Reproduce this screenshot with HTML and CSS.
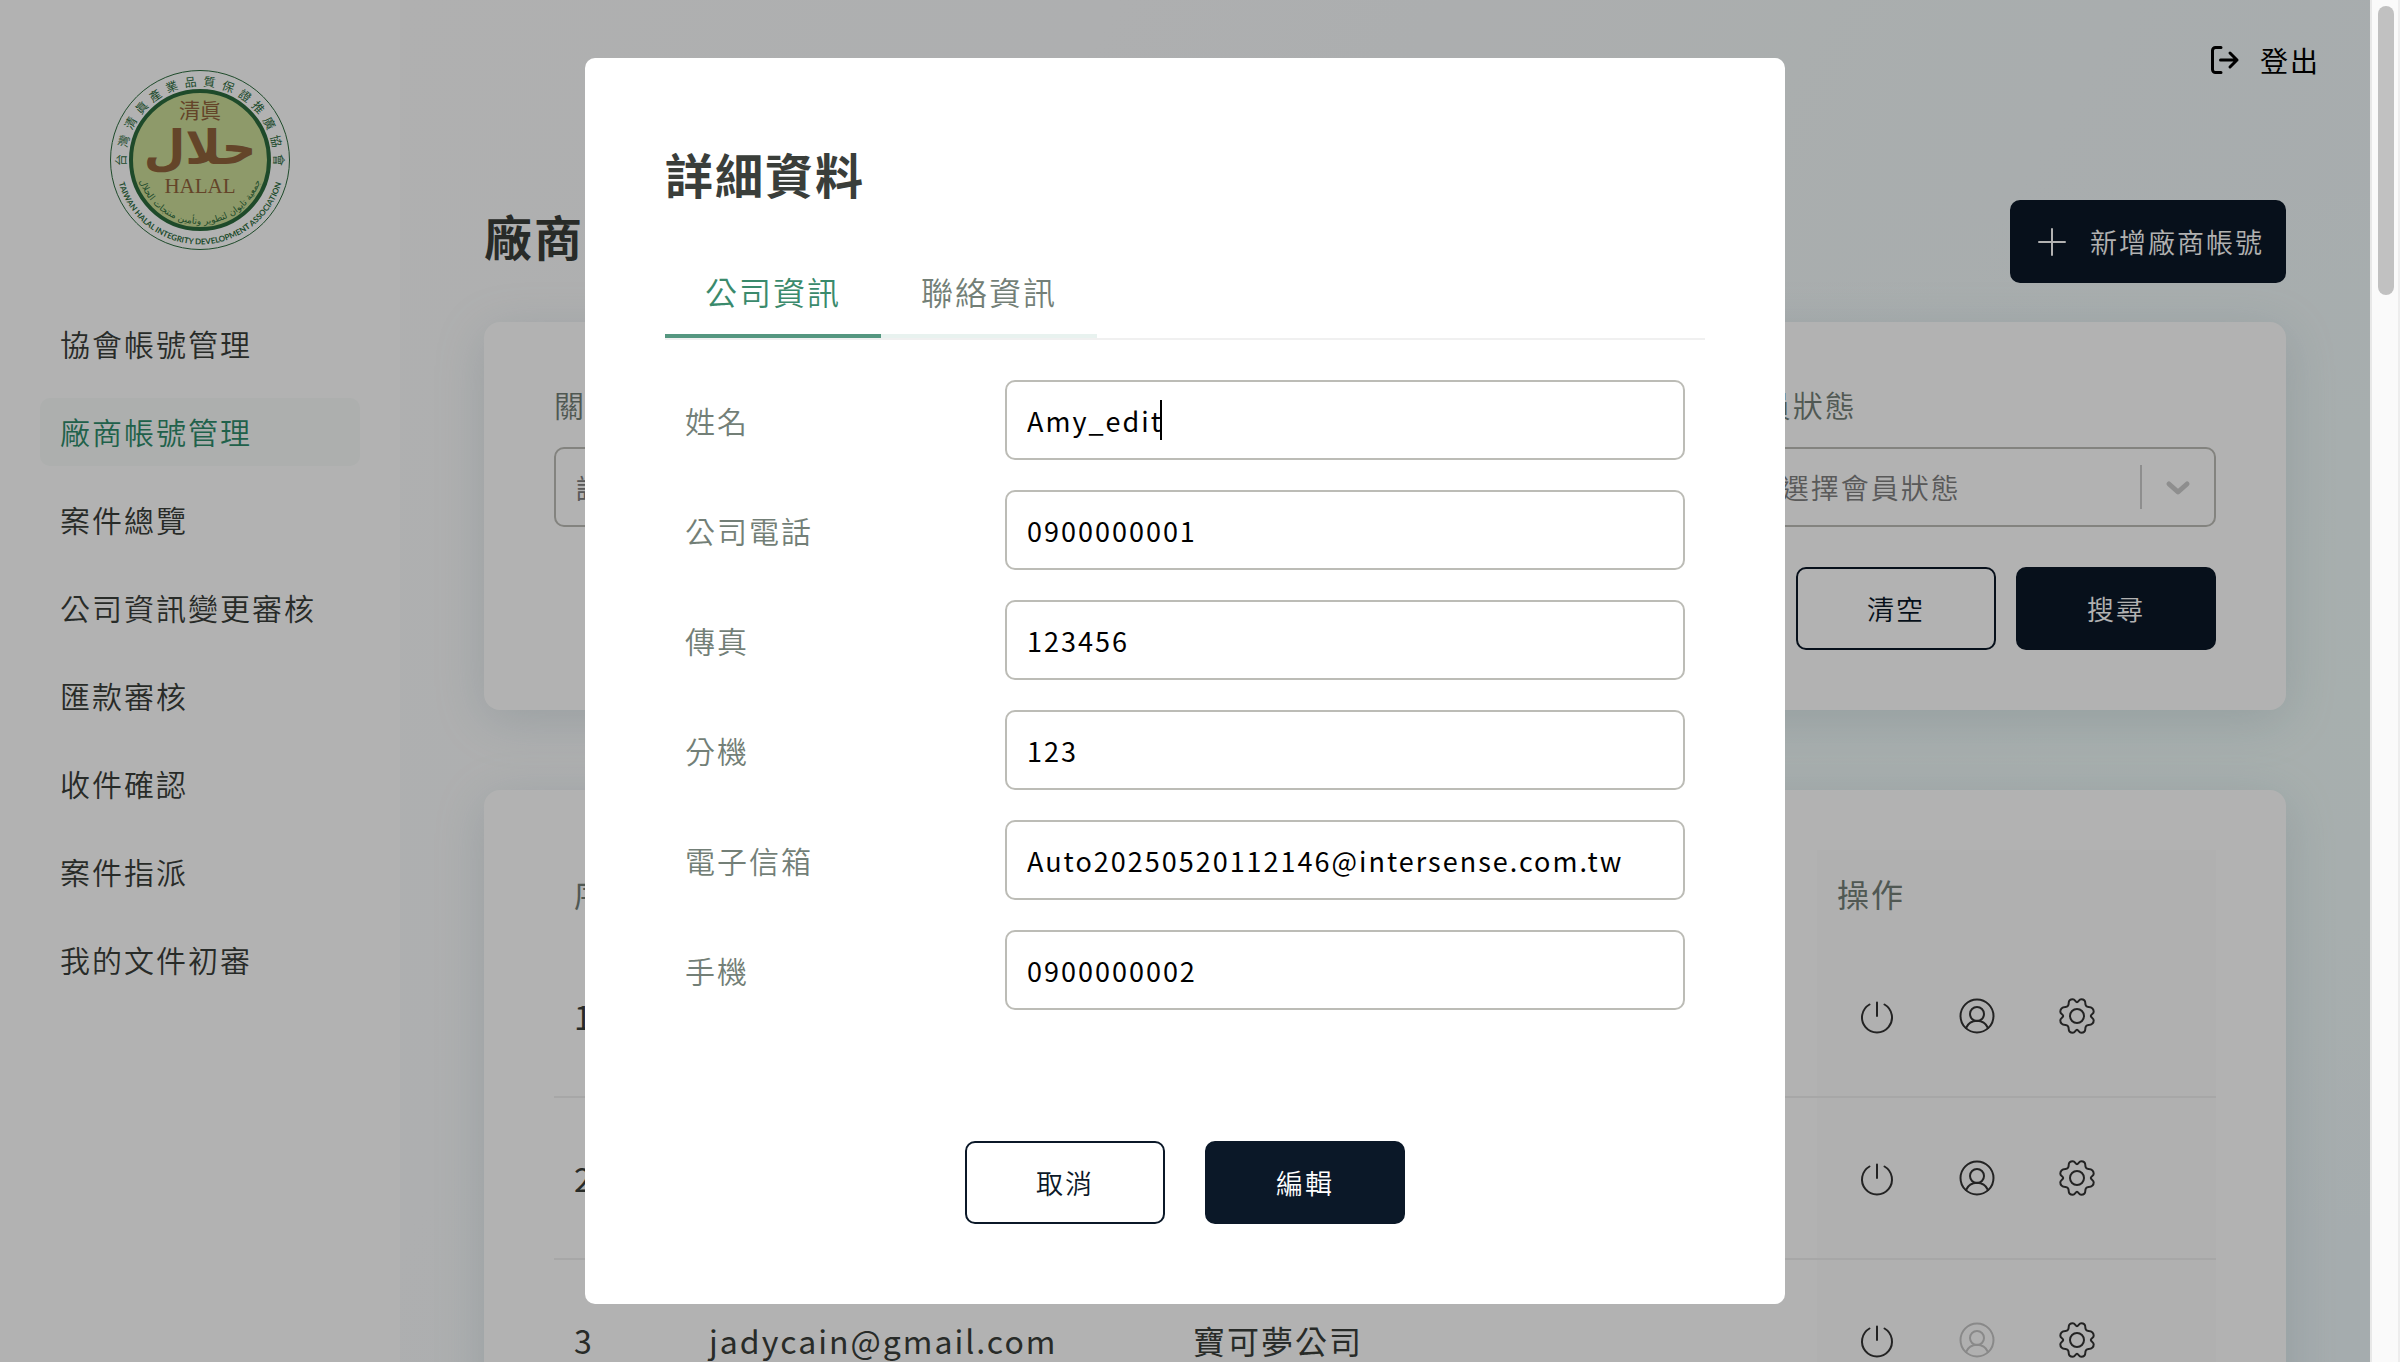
FILE: index.html
```html
<!DOCTYPE html>
<html lang="zh-Hant">
<head>
<meta charset="utf-8">
<title>廠商帳號管理</title>
<link rel="stylesheet" href="styles.css">
</head>
<body>
<svg class="sprite" aria-hidden="true">
  <symbol id="power" viewBox="0 0 40 40"><path d="M20 6.500V20M12.500 8.500a15 15 0 1 0 15 0"/></symbol>
  <symbol id="user" viewBox="0 0 40 40"><circle cx="20" cy="20" r="16.500"/><circle cx="20" cy="18" r="7"/><path d="M9 32c2-4.500 6-7.200 11-7.200s9 2.700 11 7.200"/></symbol>
  <symbol id="gear" viewBox="0 0 40 40"><circle cx="20" cy="20" r="7"/><path d="M20 6.200C21.500 6.200 22 3.300 24.200 3.300C27 3.300 28.300 4.600 28.300 7C28.300 9.300 29 10.800 31.500 11C34 11.200 36.700 12.500 36.700 15.800C36.700 18 33.800 18.500 33.800 20C33.800 21.500 36.700 22 36.700 24.200C36.700 27.500 34 28.800 31.500 29C29 29.200 28.300 30.700 28.300 33C28.300 35.400 27 36.700 24.200 36.700C22 36.700 21.500 33.800 20 33.800C18.500 33.800 18 36.700 15.800 36.700C13 36.700 11.700 35.400 11.700 33C11.700 30.700 11 29.200 8.500 29C6 28.800 3.300 27.500 3.300 24.200C3.300 22 6.200 21.500 6.200 20C6.200 18.500 3.300 18 3.300 15.800C3.300 12.500 6 11.200 8.500 11C11 10.800 11.700 9.300 11.700 7C11.700 4.600 13 3.300 15.800 3.300C18 3.300 18.500 6.200 20 6.200Z"/></symbol>
</svg>
<div class="window">
  <div class="page">
    <div class="app">
      <aside class="sidebar">
        <svg class="logo" viewBox="10 10 180 180" role="img" aria-label="HALAL">
          <defs>
            <path id="outer-arc" d="M15.500 100A84.500 84.500 0 0 0 184.500 100"/>
            <path id="inner-arc" d="M36 100A64 64 0 0 0 164 100"/>
          </defs>
          <circle class="logo-rim" cx="100" cy="100" r="89.500"/>
          <circle class="logo-disc" cx="100" cy="100" r="69"/>
          <g class="logo-ring">
            <text x="100" y="26" transform="rotate(-90 100 100)">台</text>
            <text x="100" y="26" transform="rotate(-76 100 100)">灣</text>
            <text x="100" y="26" transform="rotate(-62 100 100)">清</text>
            <text x="100" y="26" transform="rotate(-48 100 100)">眞</text>
            <text x="100" y="26" transform="rotate(-35 100 100)">產</text>
            <text x="100" y="26" transform="rotate(-21 100 100)">業</text>
            <text x="100" y="26" transform="rotate(-7 100 100)">品</text>
            <text x="100" y="26" transform="rotate(7 100 100)">質</text>
            <text x="100" y="26" transform="rotate(21 100 100)">保</text>
            <text x="100" y="26" transform="rotate(35 100 100)">證</text>
            <text x="100" y="26" transform="rotate(48 100 100)">推</text>
            <text x="100" y="26" transform="rotate(62 100 100)">廣</text>
            <text x="100" y="26" transform="rotate(76 100 100)">協</text>
            <text x="100" y="26" transform="rotate(90 100 100)">會</text>
          </g>
          <text class="logo-english"><textPath href="#outer-arc" startOffset="50%">TAIWAN HALAL INTEGRITY DEVELOPMENT ASSOCIATION</textPath></text>
          <text class="logo-arabic"><textPath href="#inner-arc" startOffset="50%">جمعية تايوان لتطوير وتأمين منتجات الحلال</textPath></text>
          <text class="logo-top" x="100" y="58">清眞</text>
          <text class="logo-halal" x="100" y="104">حلال</text>
          <text class="logo-latin" x="100" y="133">HALAL</text>
        </svg>
        <nav class="menu">
          <a href="#">協會帳號管理</a>
          <a href="#" class="active">廠商帳號管理</a>
          <a href="#">案件總覽</a>
          <a href="#">公司資訊變更審核</a>
          <a href="#">匯款審核</a>
          <a href="#">收件確認</a>
          <a href="#">案件指派</a>
          <a href="#">我的文件初審</a>
        </nav>
      </aside>
      <main class="main">
        <header class="topbar">
          <button class="logout" type="button">
            <svg viewBox="0 0 32 32"><path d="M13 3.500H7.500a3 3 0 0 0-3 3v19a3 3 0 0 0 3 3H13M12.500 16H29M22 9l7 7-7 7"/></svg>
            登出
          </button>
        </header>
        <div class="content">
          <div class="heading">
            <h1>廠商帳號管理</h1>
            <button class="btn btn-dark btn-add" type="button">
              <svg viewBox="0 0 28 28"><path d="M14 1v26M1 14h26"/></svg>
              新增廠商帳號
            </button>
          </div>
          <form class="card">
            <div class="filters">
              <div class="filter">
                <label for="keyword">關鍵字</label>
                <input id="keyword" class="control" type="text" placeholder="請輸入關鍵字">
              </div>
              <div class="filter">
                <label for="status">會員狀態</label>
                <div class="select">
                  <select id="status" class="control"><option>請選擇會員狀態</option></select>
                  <svg class="select-mark" viewBox="0 0 60 44"><path class="rule" d="M1 0v44"/><path class="chevron" d="M29 19l9 8 9-8"/></svg>
                </div>
              </div>
            </div>
            <div class="actions">
              <button class="btn btn-line" type="reset">清空</button>
              <button class="btn btn-dark" type="button">搜尋</button>
            </div>
          </form>
          <section class="card">
            <table class="accounts">
              <colgroup><col class="col-no"><col class="col-account"><col><col class="col-ops"></colgroup>
              <thead>
                <tr><th>序號</th><th>帳號</th><th>公司名稱</th><th class="ops">操作</th></tr>
              </thead>
              <tbody>
                <tr>
                  <td>1</td><td></td><td></td>
                  <td class="ops"><div class="tools">
                    <button type="button" aria-label="啟用"><svg><use href="#power"/></svg></button>
                    <button type="button" aria-label="帳號"><svg><use href="#user"/></svg></button>
                    <button type="button" aria-label="設定"><svg><use href="#gear"/></svg></button>
                  </div></td>
                </tr>
                <tr>
                  <td>2</td><td></td><td></td>
                  <td class="ops"><div class="tools">
                    <button type="button" aria-label="啟用"><svg><use href="#power"/></svg></button>
                    <button type="button" aria-label="帳號"><svg><use href="#user"/></svg></button>
                    <button type="button" aria-label="設定"><svg><use href="#gear"/></svg></button>
                  </div></td>
                </tr>
                <tr>
                  <td>3</td><td>jadycain@gmail.com</td><td>寶可夢公司</td>
                  <td class="ops"><div class="tools">
                    <button type="button" aria-label="啟用"><svg><use href="#power"/></svg></button>
                    <button type="button" aria-label="帳號" disabled><svg><use href="#user"/></svg></button>
                    <button type="button" aria-label="設定"><svg><use href="#gear"/></svg></button>
                  </div></td>
                </tr>
              </tbody>
            </table>
          </section>
        </div>
      </main>
    </div>
    <div class="overlay">
      <form class="modal" role="dialog" aria-labelledby="modal-title">
        <h2 id="modal-title">詳細資料</h2>
        <div class="tabs" role="tablist">
          <button type="button" role="tab" aria-selected="true">公司資訊</button>
          <button type="button" role="tab" aria-selected="false">聯絡資訊</button>
        </div>
        <div class="fields">
          <div class="field"><label for="name">姓名</label><div class="entry"><input id="name" class="control" type="text" value="Amy_edit"><span class="caret"></span></div></div>
          <div class="field"><label for="phone">公司電話</label><div class="entry"><input id="phone" class="control" type="text" value="0900000001"></div></div>
          <div class="field"><label for="fax">傳真</label><div class="entry"><input id="fax" class="control" type="text" value="123456"></div></div>
          <div class="field"><label for="ext">分機</label><div class="entry"><input id="ext" class="control" type="text" value="123"></div></div>
          <div class="field"><label for="email">電子信箱</label><div class="entry"><input id="email" class="control" type="text" value="Auto20250520112146@intersense.com.tw"></div></div>
          <div class="field"><label for="mobile">手機</label><div class="entry"><input id="mobile" class="control" type="text" value="0900000002"></div></div>
        </div>
        <div class="modal-actions">
          <button class="btn btn-line" type="button">取消</button>
          <button class="btn btn-dark" type="button">編輯</button>
        </div>
      </form>
    </div>
  </div>
  <div class="scrollbar"><div class="thumb"></div></div>
</div>
</body>
</html>
```

FILE: styles.css
```css
:root {
  --navy: #0b1828;
  --green: #3a8a6c;
  --ink: #3a3e3a;
  --muted: #737f77;
  --line: #bcbcb6;
}

* { box-sizing: border-box; }

body {
  margin: 0;
  color: var(--ink);
  font-family: "Noto Sans CJK TC", "Noto Sans", sans-serif;
  font-size: 30px;
  letter-spacing: 2px;
}

button, input, select {
  margin: 0;
  font-family: inherit;
  letter-spacing: inherit;
}

h1, h2 {
  margin: 0;
  font-size: 48px;
  line-height: 70px;
  font-weight: 700;
}

svg {
  display: block;
  fill: none;
  stroke-linecap: round;
  stroke-linejoin: round;
}

.sprite { position: absolute; width: 0; height: 0; }

.window {
  display: grid;
  grid-template-columns: minmax(0, 1fr) 30px;
  height: 100vh;
  overflow: hidden;
}

.page {
  position: relative;
  height: 100vh;
  overflow: hidden;
}

.app {
  display: grid;
  grid-template-columns: 400px minmax(0, 1fr);
  min-height: 100%;
}

/* Sidebar */
.sidebar {
  padding: 70px 40px;
  background: #fff;
}

.logo {
  width: 180px;
  height: 180px;
  margin: 0 auto 60px;
  letter-spacing: 0;
  text-anchor: middle;
}

.logo text { fill: #2c6b3d; }
.logo-rim { stroke: #2c6b3d; stroke-width: 1; }
.logo-disc { fill: #ccdd98; stroke: #2c6b3d; stroke-width: 4; }
.logo-ring { font-size: 12px; }
.logo-english { font: 700 8px Lato, sans-serif; }
.logo-arabic { font: 9px "DejaVu Sans", sans-serif; }
.logo .logo-top { fill: #90633c; font-size: 21px; }
.logo .logo-halal { fill: #90633c; font: 700 48px "DejaVu Sans", sans-serif; }
.logo .logo-latin { fill: #90633c; font: 21px "Liberation Serif", serif; }

.menu {
  display: flex;
  flex-direction: column;
  gap: 20px;
}

.menu a {
  height: 68px;
  padding: 0 20px;
  border-radius: 10px;
  color: var(--ink);
  font-weight: 350;
  line-height: 66px;
  text-decoration: none;
}

.menu .active { background: #f8fbfa; color: #2e8b6b; }

/* Main area */
.main {
  background:
    radial-gradient(ellipse at 100% 45%, #f0fbf9 0, transparent 45%),
    linear-gradient(120deg, #fcfcfc 0, #f9fbfc 25%, #f2f8f9 60%, #ecf6f9 100%);
}

.topbar {
  display: flex;
  align-items: center;
  justify-content: flex-end;
  height: 120px;
  padding: 0 50px;
}

.logout {
  display: flex;
  align-items: center;
  gap: 20px;
  padding: 0;
  border: 0;
  background: none;
  color: #000;
  font-size: 28px;
}

.logout svg { width: 32px; height: 32px; stroke: #000; stroke-width: 3; }

.content { padding: 80px 84px 0; }

.heading {
  display: flex;
  justify-content: space-between;
  margin-bottom: 39px;
}

.btn {
  width: 200px;
  height: 83px;
  padding: 0;
  border: 2px solid var(--navy);
  border-radius: 10px;
  font-size: 27px;
  font-weight: 350;
}

.btn-dark { background: var(--navy); color: #fff; }
.btn-line { background: transparent; color: var(--navy); }

.btn-add {
  display: flex;
  align-items: center;
  justify-content: space-between;
  width: 276px;
  padding: 0 20px 0 26px;
}

.btn-add svg { width: 28px; height: 28px; stroke: #fff; stroke-width: 2; }

.card {
  margin-bottom: 80px;
  padding: 60px 70px;
  border-radius: 16px;
  background: #fff;
  box-shadow: 0 10px 50px rgba(120, 150, 165, 0.22);
}

.filters {
  display: grid;
  grid-template-columns: repeat(3, 1fr);
  column-gap: 100px;
}

.filter:last-child { grid-column: 3; }

.filter label {
  display: block;
  margin-bottom: 21px;
  color: var(--muted);
  font-weight: 350;
  line-height: 44px;
}

.control {
  display: block;
  width: 100%;
  height: 80px;
  padding: 0 20px;
  border: 2px solid var(--line);
  border-radius: 10px;
  outline: 0;
  background: transparent;
  color: #000;
  font-size: 27px;
}

.control::placeholder { color: #808080; }

.select { position: relative; }

.select .control {
  appearance: none;
  color: #808080;
  font-size: 28px;
  font-weight: 350;
}

.select-mark {
  position: absolute;
  top: 18px;
  right: 16px;
  width: 60px;
  height: 44px;
  pointer-events: none;
}

.rule { stroke: #ccc; stroke-width: 2; }
.chevron { stroke: #ccc; stroke-width: 5; }

.actions {
  display: flex;
  justify-content: flex-end;
  gap: 20px;
  margin-top: 40px;
}

/* Account table */
.accounts {
  width: 100%;
  border-collapse: collapse;
  table-layout: fixed;
  font-size: 32px;
}

.col-no { width: 135px; }
.col-account { width: 484px; }
.col-ops { width: 399px; }

.accounts th {
  height: 85px;
  padding: 0 20px;
  color: var(--muted);
  font-weight: 400;
  text-align: left;
}

.accounts td {
  height: 162px;
  padding: 0 20px;
  border-bottom: 2px solid #f0f0f0;
}

.accounts .ops { background: #fdfdfd; }

.tools {
  display: flex;
  gap: 60px;
  padding: 0 20px;
}

.tools button {
  padding: 0;
  border: 0;
  background: none;
  color: #333;
}

.tools button:disabled { color: #c4c4c4; }

.tools svg { width: 40px; height: 40px; stroke: currentColor; stroke-width: 2; }

/* Detail dialog */
.overlay {
  position: absolute;
  inset: 0;
  display: flex;
  align-items: center;
  justify-content: center;
  background: rgba(0, 0, 0, 0.3);
}

.modal {
  width: 1200px;
  padding: 80px;
  border-radius: 10px;
  background: #fff;
}

.tabs {
  display: flex;
  margin-top: 40px;
  border-bottom: 2px solid #f0f0f0;
}

.tabs button {
  height: 90px;
  padding: 0 40px;
  border: 0;
  border-bottom: 4px solid #e8f2ef;
  background: none;
  color: var(--muted);
  font-size: 32px;
  font-weight: 350;
}

.tabs [aria-selected="true"] { border-color: #559780; color: var(--green); }

.fields {
  display: flex;
  flex-direction: column;
  gap: 30px;
  padding: 40px 20px 0;
}

.field {
  display: grid;
  grid-template-columns: 320px minmax(0, 1fr);
  align-items: center;
}

.field label { color: var(--muted); font-weight: 350; }

.entry { position: relative; }

.caret {
  position: absolute;
  top: 20px;
  left: 155px;
  width: 2px;
  height: 40px;
  background: #000;
}

.modal-actions {
  display: flex;
  justify-content: center;
  gap: 40px;
  margin-top: 131px;
}

/* Scroll track */
.scrollbar {
  padding: 6px;
  border-left: 2px solid #e8e8e8;
  border-right: 2px solid #ededed;
  background: #fafafa;
}

.thumb {
  width: 16px;
  height: 289px;
  border-radius: 8px;
  background: #c1c1c1;
}
```
